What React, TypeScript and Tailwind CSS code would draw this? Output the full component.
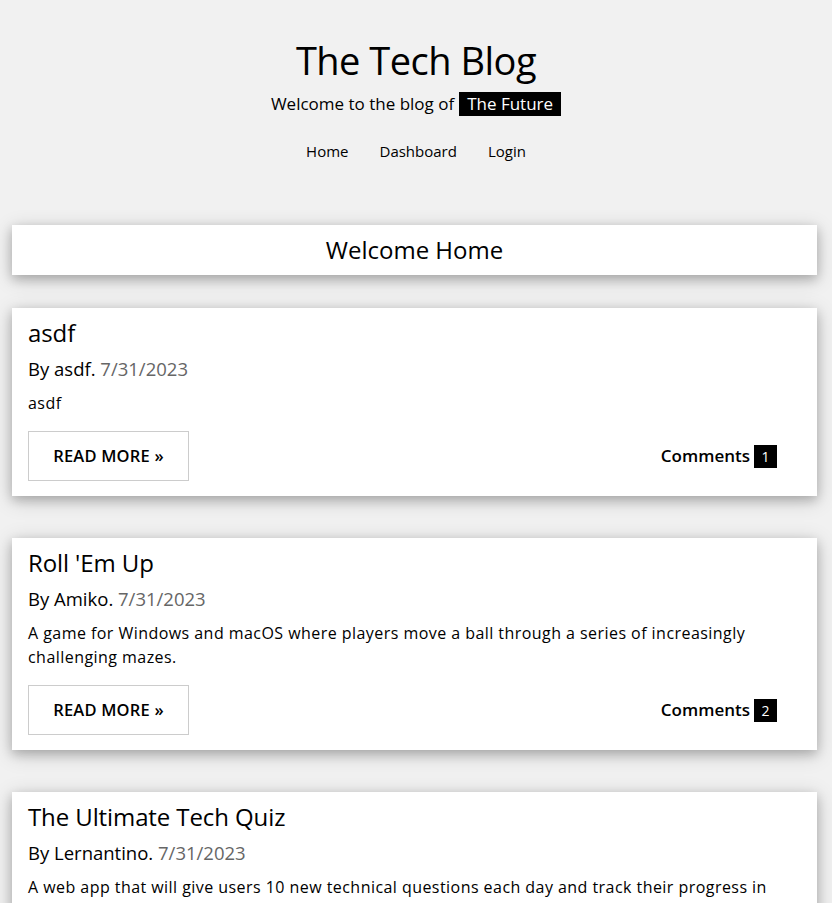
import React from "react";

const posts = [
  { title: "asdf", author: "asdf", date: "7/31/2023", body: "asdf", comments: 1 },
  {
    title: "Roll 'Em Up",
    author: "Amiko",
    date: "7/31/2023",
    body: "A game for Windows and macOS where players move a ball through a series of increasingly challenging mazes.",
    comments: 2,
  },
  {
    title: "The Ultimate Tech Quiz",
    author: "Lernantino",
    date: "7/31/2023",
    body: "A web app that will give users 10 new technical questions each day and track their progress in things like programming, cybersecurity, and more.",
    comments: 0,
  },
];

export default function App() {
  return (
    <div
      className="min-h-[903px] bg-[#f1f1f1] text-black"
      style={{ fontFamily: '"Open Sans", "Liberation Sans", sans-serif' }}
    >
      <header className="flex flex-col items-center pt-[35px]">
        <h1 className="text-[38px] leading-[50px] font-medium tracking-[-0.5px]">The Tech Blog</h1>
        <p className="mt-[7px] flex items-center text-[17px] leading-[24px]">
          <span>Welcome to the blog of</span>
          <span className="ml-[5px] bg-black px-[8px] text-white">The Future</span>
        </p>
        <nav className="mt-[25px] flex gap-[31px] text-[15px] leading-[20px]">
          <span>Home</span>
          <span>Dashboard</span>
          <span>Login</span>
        </nav>
      </header>

      <main className="ml-[12px] mr-[15px] mt-[64px] flex flex-col">
        <div className="flex h-[50px] items-center justify-center bg-white text-[24px] shadow-[0_4px_10px_0_rgba(0,0,0,0.2),0_4px_20px_0_rgba(0,0,0,0.19)]">
          Welcome Home
        </div>

        {posts.map((p, i) => (
          <article
            key={i}
            className={`${i === 0 ? "mt-[33px]" : "mt-[42px]"} bg-white px-[16px] pb-[15px] pt-[8px] shadow-[0_4px_10px_0_rgba(0,0,0,0.2),0_4px_20px_0_rgba(0,0,0,0.19)]`}
          >
            <h2 className="text-[24px] leading-[34px] font-medium tracking-[-0.1px]">{p.title}</h2>
            <p className="mt-[6px] text-[18.5px] leading-[26px]">
              By {p.author}. <span className="text-[#666]">{p.date}</span>
            </p>
            <p className="mt-[9px] text-[16px] leading-[24px] tracking-[0.45px]">{p.body}</p>
            <div className="mt-[16px] flex items-center justify-between">
              <div className="flex h-[50px] w-[161px] items-center justify-center border border-[#ccc] text-[16.5px] font-semibold tracking-[0.2px]">
                READ MORE »
              </div>
              <div className="mr-[24px] flex items-center text-[17px] font-semibold">
                <span>Comments</span>
                <span className="ml-[4px] flex h-[23px] w-[23px] items-center justify-center bg-black text-[14px] font-normal text-white">
                  {p.comments}
                </span>
              </div>
            </div>
          </article>
        ))}
      </main>
    </div>
  );
}
